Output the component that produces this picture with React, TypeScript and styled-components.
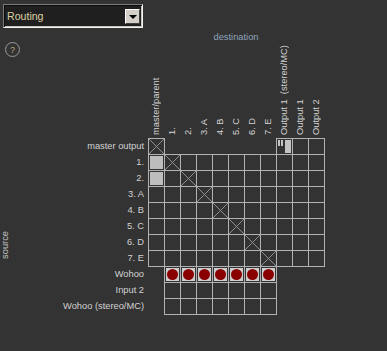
import { Fragment } from "react";
import styled, { createGlobalStyle } from "styled-components";

type Kind = "empty" | "x" | "fill" | "dot" | "bars";

interface Row {
  label: string;
  cols: number[];
  special?: Record<number, Kind>;
  all?: Kind;
}

const destinations = [
  "master/parent",
  "1.",
  "2.",
  "3. A",
  "4. B",
  "5. C",
  "6. D",
  "7. E",
  "Output 1  (stereo/MC)",
  "Output 1",
  "Output 2",
];

const every = destinations.map((_, i) => i);
const tracks = [1, 2, 3, 4, 5, 6, 7];

const rows: Row[] = [
  { label: "master output", cols: [0, 8, 9, 10], special: { 0: "x", 8: "bars" } },
  { label: "1.", cols: every, special: { 0: "fill", 1: "x" } },
  { label: "2.", cols: every, special: { 0: "fill", 2: "x" } },
  { label: "3. A", cols: every, special: { 3: "x" } },
  { label: "4. B", cols: every, special: { 4: "x" } },
  { label: "5. C", cols: every, special: { 5: "x" } },
  { label: "6. D", cols: every, special: { 6: "x" } },
  { label: "7. E", cols: every, special: { 7: "x" } },
  { label: "Wohoo", cols: tracks, all: "dot" },
  { label: "Input 2", cols: tracks },
  { label: "Wohoo (stereo/MC)", cols: tracks },
];

const GlobalStyle = createGlobalStyle`
  html, body {
    margin: 0;
    padding: 0;
    background: #333333;
    font-family: "Liberation Sans", Arial, sans-serif;
    font-size: 9.3px;
  }
`;

const Page = styled.div`
  width: 387px;
  height: 351px;
  background: #333333;
  display: flex;
  flex-direction: column;
`;

const TopBar = styled.div`
  padding: 4px 0 0 3px;
  display: flex;
`;

const Dropdown = styled.div`
  width: 140px;
  height: 24px;
  box-sizing: border-box;
  border: 1px solid;
  border-color: #7a7a7a #f4f4f4 #f4f4f4 #7a7a7a;
  box-shadow: inset 1px 1px 0 #0c0c0c, inset -1px -1px 0 #c8c4bc;
  background: #1f1f1f;
  display: flex;
  align-items: center;
  justify-content: space-between;
  padding: 0 2px 0 3px;
`;

const DropdownText = styled.span`
  font-size: 10.6px;
  color: #dccfa6;
`;

const ArrowButton = styled.div`
  width: 15px;
  height: 15px;
  box-sizing: border-box;
  background: #d4d0c8;
  border: 1px solid;
  border-color: #ffffff #404040 #404040 #ffffff;
  display: flex;
  align-items: center;
  justify-content: center;

  &::after {
    content: "";
    border-left: 4px solid transparent;
    border-right: 4px solid transparent;
    border-top: 4px solid #000;
    margin-top: 1px;
  }
`;

const Body = styled.div`
  display: flex;
`;

const Side = styled.div`
  width: 20px;
  display: flex;
  flex-direction: column;
`;

const Help = styled.div`
  margin: 14px 0 0 5px;
  width: 15px;
  height: 15px;
  box-sizing: border-box;
  border: 1px solid #9a9a9a;
  border-radius: 50%;
  display: flex;
  align-items: center;
  justify-content: center;
  font-size: 9px;
  color: #b8a878;
`;

const SourceLabel = styled.div`
  margin-top: 174px;
  width: 11px;
  writing-mode: vertical-rl;
  transform: rotate(180deg);
  line-height: 11px;
  color: #c4c4c4;
`;

const Matrix = styled.div`
  display: grid;
  grid-template-columns: 128px repeat(11, 16px);
  grid-template-rows: 15px 95px repeat(11, 16px);
`;

const Title = styled.div`
  grid-column: 2 / -1;
  padding-top: 3px;
  line-height: 12px;
  text-align: center;
  color: #8ea3ba;
`;

const Corner = styled.div``;

const ColHead = styled.div`
  width: 16px;
  height: 92px;
  writing-mode: vertical-rl;
  transform: rotate(180deg);
  line-height: 16px;
  white-space: pre;
  color: #d2d2d2;
`;

const RowLabel = styled.div`
  height: 16px;
  line-height: 16px;
  text-align: right;
  padding-right: 4px;
  color: #d2d2d2;
  white-space: nowrap;
`;

const Gap = styled.div``;

const Cell = styled.div<{ $kind: Kind }>`
  width: 17px;
  height: 17px;
  box-sizing: border-box;
  border: 1px solid #b2b2b2;
  padding: ${(p) => (p.$kind === "fill" || p.$kind === "dot" ? "1px" : "0")};
  display: flex;
  align-items: center;
  justify-content: center;
`;

const Swatch = styled.div<{ $light?: boolean }>`
  width: 13px;
  height: 13px;
  background: ${(p) => (p.$light ? "#cdcdcd" : "#bdbdbd")};
  display: flex;
  align-items: center;
  justify-content: center;
`;

const Dot = styled.div`
  width: 11px;
  height: 11px;
  border-radius: 50%;
  background: #8a0000;
`;

const Cross = () => (
  <svg width="15" height="15" viewBox="0 0 15 15">
    <path d="M0 0L15 15M15 0L0 15" stroke="#8e8e8e" strokeWidth="1" />
  </svg>
);

const Bars = () => (
  <svg width="15" height="15" viewBox="0 0 15 15">
    <rect x="1" y="1" width="2" height="6" fill="#c4c4c4" />
    <rect x="4" y="1" width="2" height="6" fill="#c4c4c4" />
    <rect x="8" y="1" width="6" height="13" fill="#c4c4c4" />
  </svg>
);

const CellContent = ({ kind }: { kind: Kind }) => {
  if (kind === "x") return <Cross />;
  if (kind === "bars") return <Bars />;
  if (kind === "fill") return <Swatch />;
  if (kind === "dot")
    return (
      <Swatch $light>
        <Dot />
      </Swatch>
    );
  return null;
};

const App = () => {
  return (
    <Page>
      <GlobalStyle />
      <TopBar>
        <Dropdown>
          <DropdownText>Routing</DropdownText>
          <ArrowButton />
        </Dropdown>
      </TopBar>
      <Body>
        <Side>
          <Help>?</Help>
          <SourceLabel>source</SourceLabel>
        </Side>
        <Matrix>
          <Corner />
          <Title>destination</Title>
          <Corner />
          {destinations.map((d) => (
            <ColHead key={d}>{d}</ColHead>
          ))}
          {rows.map((row) => (
            <Fragment key={row.label}>
              <RowLabel>{row.label}</RowLabel>
              {destinations.map((_, c) => {
                if (!row.cols.includes(c)) return <Gap key={c} />;
                const kind: Kind = row.special?.[c] ?? row.all ?? "empty";
                return (
                  <Cell key={c} $kind={kind}>
                    <CellContent kind={kind} />
                  </Cell>
                );
              })}
            </Fragment>
          ))}
        </Matrix>
      </Body>
    </Page>
  );
};

export default App;
